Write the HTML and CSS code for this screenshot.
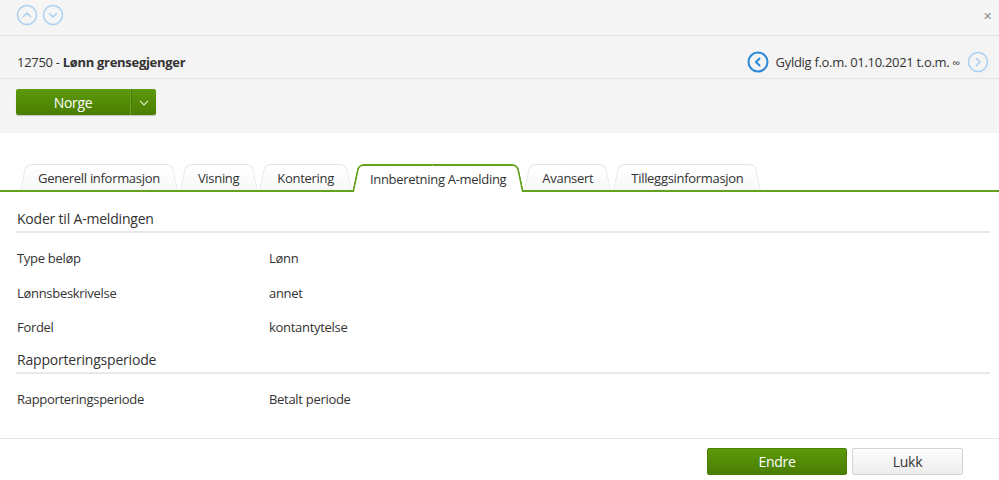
FILE: index.html
```html
<!DOCTYPE html>
<html lang="no">
<head>
  <meta charset="UTF-8">
  <title>Lønnsart</title>
  <link rel="stylesheet" href="styles.css">
</head>
<body>
  <div class="topbar">
    <div class="nav-arrows">
      <svg class="circle-icon light" width="22" height="22" viewBox="0 0 22 22"><circle cx="11" cy="11" r="9.5"/><path d="M7.5 12.5 L11 9 L14.5 12.5"/></svg>
      <svg class="circle-icon light" width="22" height="22" viewBox="0 0 22 22"><circle cx="11" cy="11" r="9.5"/><path d="M7.5 9.5 L11 13 L14.5 9.5"/></svg>
    </div>
    <span class="close">&#x2715;</span>
  </div>

  <div class="header">
    <div class="title">12750 - <b>Lønn grensegjenger</b></div>
    <div class="period">
      <svg class="circle-icon dark" width="22" height="22" viewBox="0 0 22 22"><circle cx="11" cy="11" r="9.5"/><path d="M12.5 7.5 L9 11 L12.5 14.5"/></svg>
      <span>Gyldig f.o.m. 01.10.2021 t.o.m. <span class="inf">∞</span></span>
      <svg class="circle-icon light" width="22" height="22" viewBox="0 0 22 22"><circle cx="11" cy="11" r="9.5"/><path d="M9.5 7.5 L13 11 L9.5 14.5"/></svg>
    </div>
  </div>

  <div class="toolbar">
    <div class="split-btn">
      <span class="split-main">Norge</span>
      <span class="split-arrow">
        <svg width="10" height="6" viewBox="0 0 10 6"><path d="M1 1 L5 5 L9 1" fill="none" stroke="#d6e8c0" stroke-width="1.2"/></svg>
      </span>
    </div>
  </div>

  <div class="content">
    <div class="tabs">
      <div class="tab">Generell informasjon</div>
      <div class="tab">Visning</div>
      <div class="tab">Kontering</div>
      <div class="tab active">Innberetning A-melding</div>
      <div class="tab">Avansert</div>
      <div class="tab">Tilleggsinformasjon</div>
    </div>

    <div class="section first">
      <h3>Koder til A-meldingen</h3>
      <div class="row"><span class="label">Type beløp</span><span>Lønn</span></div>
      <div class="row"><span class="label">Lønnsbeskrivelse</span><span>annet</span></div>
      <div class="row"><span class="label">Fordel</span><span>kontantytelse</span></div>
    </div>

    <div class="section">
      <h3>Rapporteringsperiode</h3>
      <div class="row"><span class="label">Rapporteringsperiode</span><span>Betalt periode</span></div>
    </div>
  </div>

  <div class="footer">
    <button class="btn primary">Endre</button>
    <button class="btn">Lukk</button>
  </div>
</body>
</html>
```

FILE: styles.css
```css
body {
  margin: 0;
  font-family: 'Open Sans', 'Liberation Sans', sans-serif;
  font-size: 13px;
  letter-spacing: -0.3px;
  color: #333;
  background: #fff;
}
.topbar {
  height: 36px;
  background: #f5f5f5;
  border-bottom: 1px solid #e3e3e3;
  display: flex;
  align-items: center;
  justify-content: space-between;
  padding: 0 7px 0 16px;
  box-sizing: border-box;
}
.nav-arrows {
  display: flex;
  gap: 4px;
  margin-top: -6px;
}
.circle-icon {
  display: block;
  fill: none;
  stroke-linecap: round;
  stroke-linejoin: round;
}
.circle-icon.light {
  stroke: #a9d0f2;
  stroke-width: 1.5;
}
.circle-icon.dark {
  stroke: #2b87d8;
  stroke-width: 2;
}
.close {
  color: #8a8a8a;
  font-size: 11px;
  margin-top: -5px;
}
.header {
  height: 43px;
  box-sizing: border-box;
  padding: 10px 10px 0 17px;
  background: #f4f4f4;
  border-bottom: 1px solid #e3e3e3;
  display: flex;
  align-items: center;
  justify-content: space-between;
}
.title b {
  font-weight: 700;
}
.period {
  display: flex;
  align-items: center;
  gap: 7px;
}
.inf {
  font-size: 11px;
}
.toolbar {
  background: #f4f4f4;
  height: 54px;
  padding: 10px 16px 0;
  box-sizing: border-box;
}
.split-btn {
  display: inline-flex;
  height: 26px;
  border-radius: 2px;
  background: linear-gradient(#5c990a, #4a7d02);
  box-shadow: 0 1px 1px rgba(0,0,0,0.2);
  color: #fff;
  font-size: 14px;
}
.split-main {
  width: 114px;
  text-align: center;
  line-height: 27px;
  border-right: 1px solid #6da324;
  box-shadow: 1px 0 0 #4a7b05;
}
.split-arrow {
  width: 25px;
  display: flex;
  align-items: center;
  justify-content: center;
  padding-top: 2px;
}
.content {
  padding-top: 30px;
}
.tabs {
  display: flex;
  align-items: flex-end;
  gap: 2px;
  padding-left: 20px;
  border-bottom: 2px solid #64a11c;
  height: 27px;
  position: relative;
  z-index: 0;
}
.tab {
  position: relative;
  padding: 0 18px;
  height: 26px;
  line-height: 28px;
  white-space: nowrap;
}
.tab::before,
.tab::after {
  content: '';
  position: absolute;
  top: 0;
  bottom: 0;
  z-index: -1;
  border-top: 1px solid #e0e5ea;
  background: linear-gradient(#fff, #f8f8f8);
  transform-origin: bottom;
}
.tab::before {
  left: 0;
  right: 50%;
  border-left: 1px solid #e0e5ea;
  border-radius: 6px 0 0 0;
  transform: skewX(-12deg);
}
.tab::after {
  left: 50%;
  right: 0;
  border-right: 1px solid #e0e5ea;
  border-radius: 0 6px 0 0;
  transform: skewX(12deg);
}
.tab.active {
  height: 28px;
  margin: 0 -2px -2px;
  line-height: 30px;
}
.tab.active::before,
.tab.active::after {
  border-color: #64a11c;
  border-top-width: 2px;
  background: #fff;
}
.tab.active::before {
  border-left-width: 2px;
}
.tab.active::after {
  border-right-width: 2px;
}
.section {
  padding: 0 9px 0 16px;
}
.section h3 {
  margin: 0 0 8px;
  font-size: 14px;
  letter-spacing: -0.2px;
  font-weight: 400;
  line-height: 20px;
  padding: 5px 1px 2px;
  border-bottom: 2px solid #e8e8e8;
}
.section.first h3 {
  padding-top: 17px;
}
.row {
  display: flex;
  height: 34.5px;
  align-items: center;
  padding: 0 1px;
}
.label {
  width: 252px;
}
.footer {
  margin-top: 22px;
  border-top: 1px solid #e6e6e6;
  padding: 9px 36px 0 0;
  display: flex;
  justify-content: flex-end;
  gap: 5px;
}
.btn {
  font-family: inherit;
  font-size: 14px;
  letter-spacing: -0.3px;
  height: 27px;
  width: 111px;
  border: 1px solid #d3d3d3;
  border-radius: 2px;
  background: linear-gradient(#fdfdfd, #ececec);
  color: #333;
}
.btn.primary {
  width: 140px;
  border-color: #4a7d02;
  background: linear-gradient(#5c990a, #4a7d02);
  color: #fff;
}
```
